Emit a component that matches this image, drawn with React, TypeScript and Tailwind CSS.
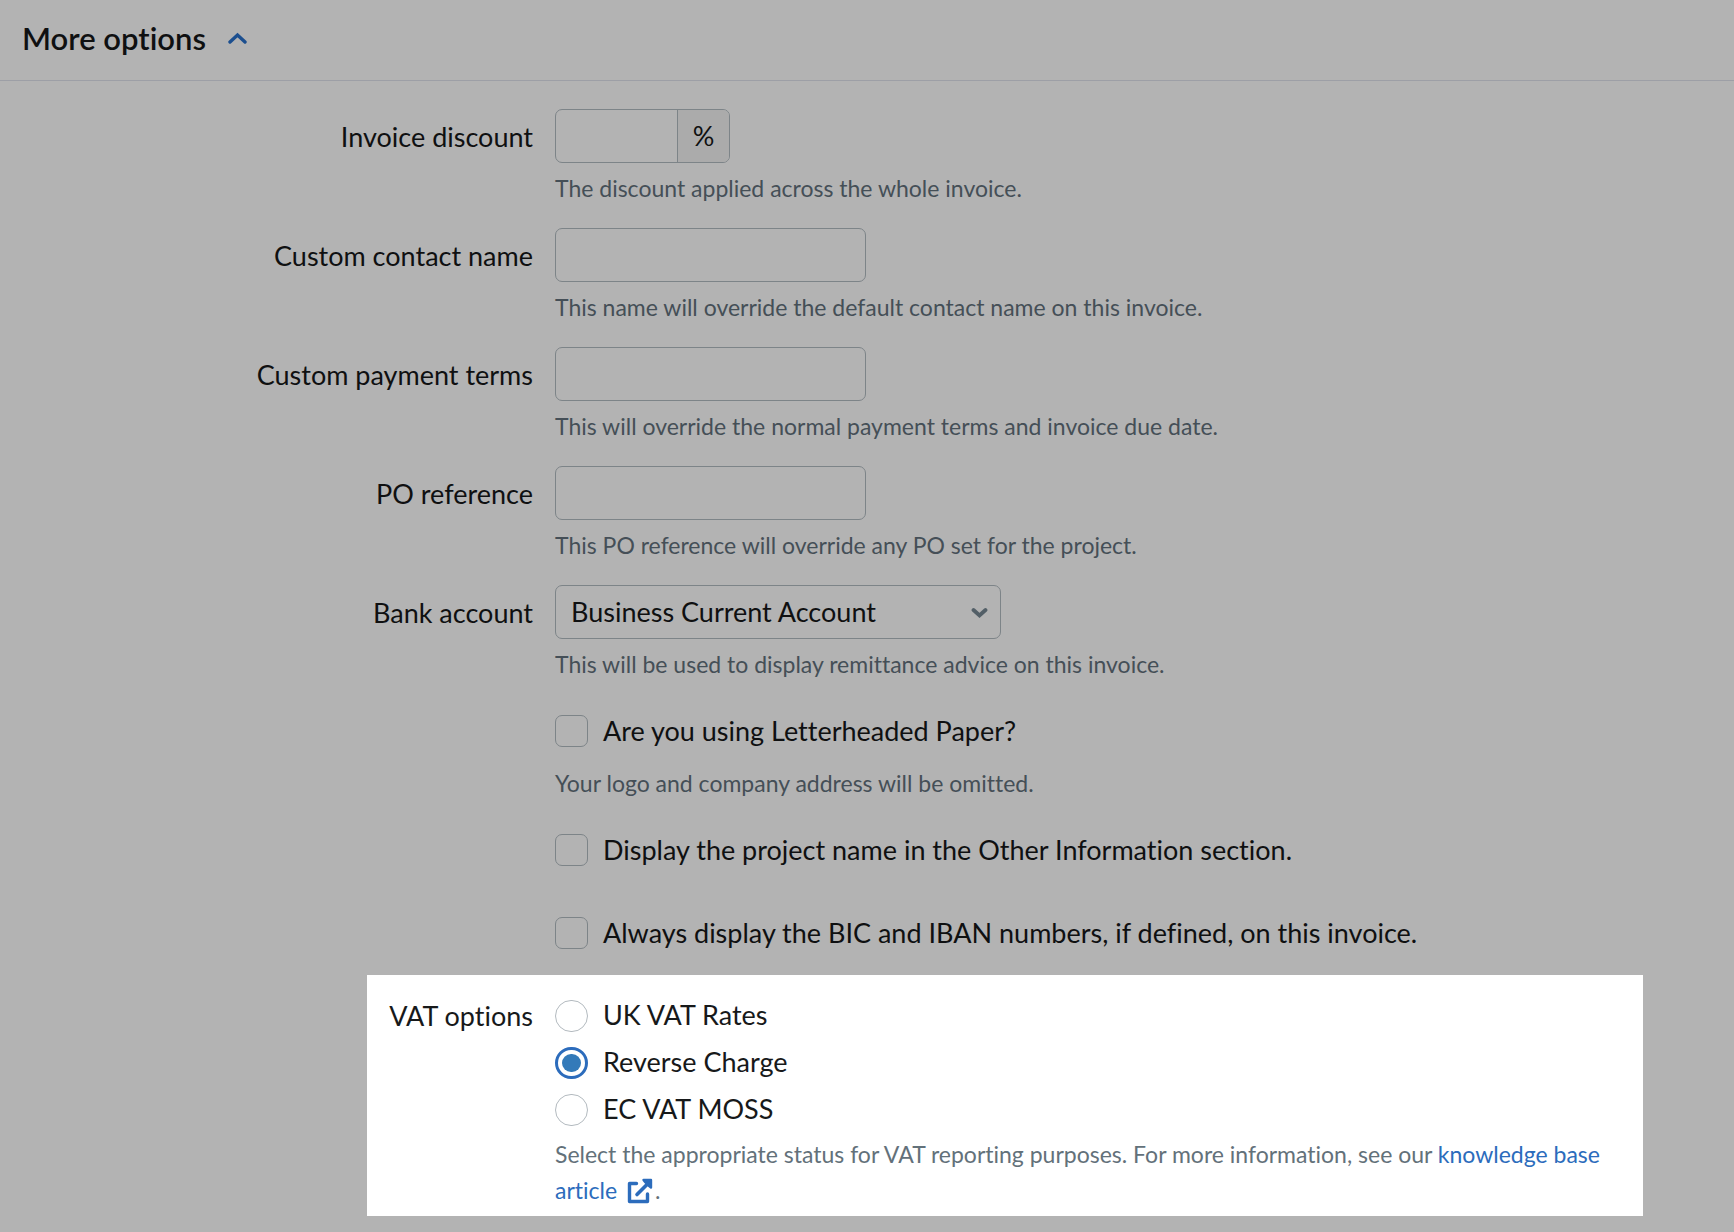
import React, { FC, ReactNode, useState } from 'react'

interface RowProps {
  id: string
  label?: string
  help?: string
  children: ReactNode
}

const textInput =
  'block h-[54px] rounded-[7px] border border-[#7d8488] bg-transparent px-[15px] outline-none'

const Row: FC<RowProps> = (props) => {
  return (
    <div className="grid grid-cols-[533px_minmax(0,_1fr)] gap-x-[22px]">
      <div className="text-right leading-[56px]">
        {props.label && <label htmlFor={props.id}>{props.label}</label>}
      </div>
      <div className="flex flex-col gap-[7px]">
        {props.children}
        <p className="text-[23px] leading-9 text-[#454f57]">{props.help}</p>
      </div>
    </div>
  )
}

interface CheckProps {
  id: string
  text: string
}

const Check: FC<CheckProps> = (props) => {
  return (
    <div className="flex h-[54px] items-center gap-[15px]">
      <input
        id={props.id}
        type="checkbox"
        className="h-8 w-[33px] shrink-0 appearance-none rounded-[7px] border border-[#7d8488] checked:bg-[#1e4e86]"
      />
      <label htmlFor={props.id}>{props.text}</label>
    </div>
  )
}

const vatOptions = [
  { id: 'uk', name: 'UK VAT Rates' },
  { id: 'reverse', name: 'Reverse Charge' },
  { id: 'moss', name: 'EC VAT MOSS' },
]

const App: FC = () => {
  const [open, setOpen] = useState(true)
  const [vat, setVat] = useState('reverse')

  return (
    <div className="min-h-screen bg-[#b3b3b3] font-['Lato',sans-serif] text-[27px] text-[#0f1011] [font-variant-ligatures:none]">
      <h2 className="border-b border-[#9d9fa6]">
        <button
          onClick={() => setOpen(!open)}
          className="flex h-20 items-center gap-[22px] px-[22px] pb-1 text-[31px] font-semibold"
        >
          More options
          <svg width="19" height="12" viewBox="0 0 19 12" fill="none" className={open ? '' : 'rotate-180'}>
            <path d="M2 10L9.500 3L17 10" stroke="#1c4f8f" strokeWidth="3.400" strokeLinecap="round" />
          </svg>
        </button>
      </h2>

      {open && (
        <form className="pt-7">
          <div className="flex flex-col gap-[22px]">
            <Row id="discount" label="Invoice discount" help="The discount applied across the whole invoice.">
              <div className="flex h-[54px] w-[175px] rounded-[7px] border border-[#7d8488]">
                <input id="discount" className="w-0 flex-1 bg-transparent px-4 outline-none" />
                <span className="flex w-[52px] items-center justify-center rounded-r-md border-l border-[#7d8488] bg-[#ababab]">
                  %
                </span>
              </div>
            </Row>
            <Row
              id="contact"
              label="Custom contact name"
              help="This name will override the default contact name on this invoice."
            >
              <input id="contact" className={`${textInput} w-[311px]`} />
            </Row>
            <Row
              id="terms"
              label="Custom payment terms"
              help="This will override the normal payment terms and invoice due date."
            >
              <input id="terms" className={`${textInput} w-[311px]`} />
            </Row>
            <Row id="po" label="PO reference" help="This PO reference will override any PO set for the project.">
              <input id="po" className={`${textInput} w-[311px]`} />
            </Row>
            <Row id="bank" label="Bank account" help="This will be used to display remittance advice on this invoice.">
              <div className="relative w-[446px]">
                <select id="bank" className={`${textInput} w-full appearance-none`}>
                  <option>Business Current Account</option>
                </select>
                <svg
                  width="17"
                  height="12"
                  viewBox="0 0 17 12"
                  fill="none"
                  className="pointer-events-none absolute top-[22px] right-[13px]"
                >
                  <path d="M2.500 3L8.500 8.500L14.500 3" stroke="#535f67" strokeWidth="3.800" strokeLinecap="round" />
                </svg>
              </div>
            </Row>
            <Row id="letterhead" help="Your logo and company address will be omitted.">
              <Check id="letterhead" text="Are you using Letterheaded Paper?" />
            </Row>
            <Row id="project">
              <Check id="project" text="Display the project name in the Other Information section." />
            </Row>
            <Row id="iban">
              <Check id="iban" text="Always display the BIC and IBAN numbers, if defined, on this invoice." />
            </Row>
          </div>

          <fieldset
            aria-labelledby="vat-label"
            className="mt-2 mr-[91px] ml-[367px] grid grid-cols-[166px_minmax(0,_1fr)] gap-x-[22px] bg-white pt-[17px] pr-2 pb-2 text-[#17191a]"
          >
            <div id="vat-label" className="text-right leading-[47px]">
              VAT options
            </div>
            <div>
              {vatOptions.map((option) => (
                <div key={option.id} className="flex h-[47px] items-center gap-[15px]">
                  <input
                    id={option.id}
                    type="radio"
                    name="vat"
                    checked={vat === option.id}
                    onChange={() => setVat(option.id)}
                    className="grid h-8 w-[33px] shrink-0 appearance-none place-items-center rounded-full border border-[#b3babf] checked:border-3 checked:border-[#2c6cbc] checked:before:h-[18px] checked:before:w-[19px] checked:before:rounded-full checked:before:bg-[#337ab9] checked:before:content-['']"
                  />
                  <label htmlFor={option.id}>{option.name}</label>
                </div>
              ))}
              <p className="mt-[3px] text-[23px] leading-9 text-[#63717a]">
                Select the appropriate status for VAT reporting purposes. For more information, see our{' '}
                <a href="#" className="text-[#2c6cbc]">
                  knowledge base article{' '}
                  <svg width="26" height="26" viewBox="0 0 26 26" fill="none" className="mr-0.5 ml-1 inline-block align-[-5px]">
                    <path
                      d="M9.500 5.500H2.500V23.500H20.500V16"
                      stroke="currentColor"
                      strokeWidth="3.400"
                      strokeLinecap="round"
                      strokeLinejoin="round"
                    />
                    <path d="M10 16.500L22 4.500" stroke="currentColor" strokeWidth="3.600" strokeLinecap="round" />
                    <path
                      d="M16.500 2H24V9.500L21.500 7.500L18.500 4.500Z"
                      fill="currentColor"
                      stroke="currentColor"
                      strokeWidth="2.400"
                      strokeLinejoin="round"
                    />
                  </svg>
                </a>
                .
              </p>
            </div>
          </fieldset>
        </form>
      )}
    </div>
  )
}

export default App
